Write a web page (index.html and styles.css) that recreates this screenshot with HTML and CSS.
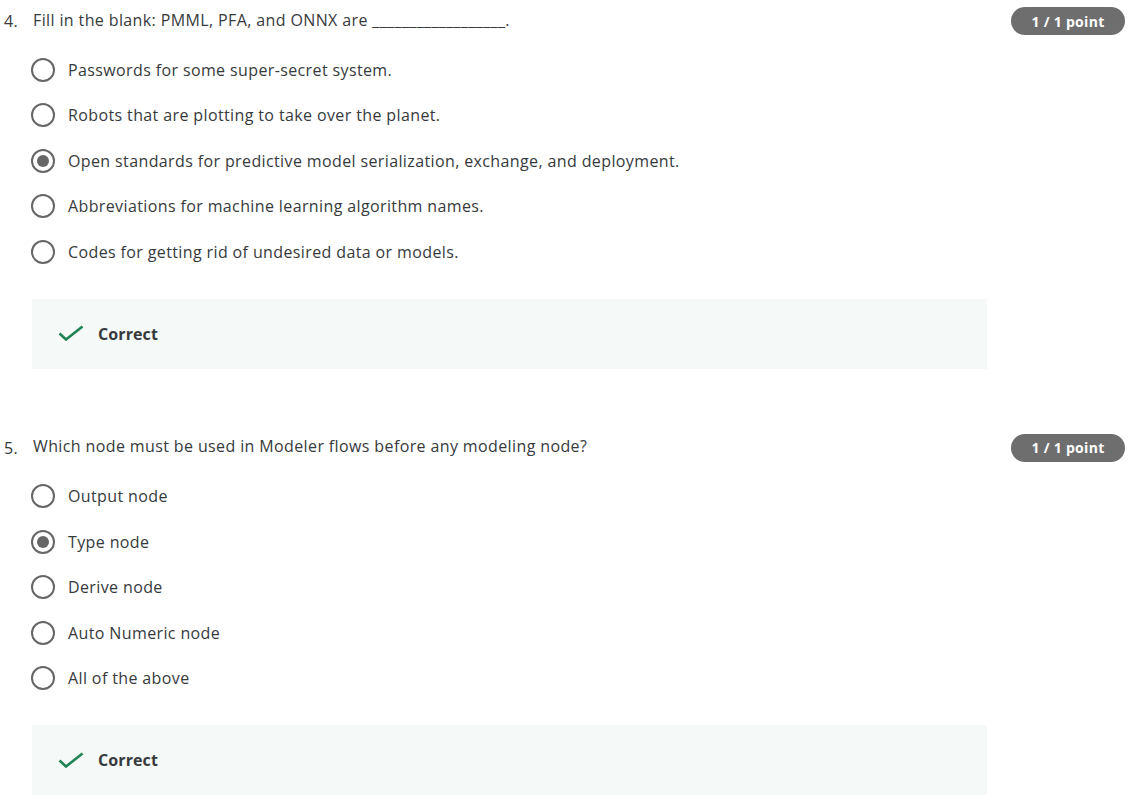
FILE: index.html
```html
<!DOCTYPE html>
<html>
<head>
<meta charset="utf-8">
<link rel="stylesheet" href="styles.css">
</head>
<body>
<div class="page">
  <section class="question">
    <div class="q-head">
      <span class="q-num">4.</span>
      <span class="q-text">Fill in the blank: PMML, PFA, and ONNX are __________________.</span>
      <span class="badge">1 / 1 point</span>
    </div>
    <ul class="options">
      <li class="option"><span class="radio"></span><span>Passwords for some super-secret system.</span></li>
      <li class="option"><span class="radio"></span><span>Robots that are plotting to take over the planet.</span></li>
      <li class="option"><span class="radio checked"></span><span>Open standards for predictive model serialization, exchange, and deployment.</span></li>
      <li class="option"><span class="radio"></span><span>Abbreviations for machine learning algorithm names.</span></li>
      <li class="option"><span class="radio"></span><span>Codes for getting rid of undesired data or models.</span></li>
    </ul>
    <div class="feedback">
      <svg class="check" width="26" height="16" viewBox="0 0 26 16"><path d="M1.5 8.5 L8 14.5 L24.5 1.5" fill="none" stroke="#1f8354" stroke-width="2.6"/></svg>
      <span class="fb-text">Correct</span>
    </div>
  </section>
  <section class="question">
    <div class="q-head">
      <span class="q-num">5.</span>
      <span class="q-text">Which node must be used in Modeler flows before any modeling node?</span>
      <span class="badge">1 / 1 point</span>
    </div>
    <ul class="options">
      <li class="option"><span class="radio"></span><span>Output node</span></li>
      <li class="option"><span class="radio checked"></span><span>Type node</span></li>
      <li class="option"><span class="radio"></span><span>Derive node</span></li>
      <li class="option"><span class="radio"></span><span>Auto Numeric node</span></li>
      <li class="option"><span class="radio"></span><span>All of the above</span></li>
    </ul>
    <div class="feedback">
      <svg class="check" width="26" height="16" viewBox="0 0 26 16"><path d="M1.5 8.5 L8 14.5 L24.5 1.5" fill="none" stroke="#1f8354" stroke-width="2.6"/></svg>
      <span class="fb-text">Correct</span>
    </div>
  </section>
</div>
</body>
</html>
```
FILE: styles.css
```css
html, body {
  margin: 0;
  padding: 0;
  background: #ffffff;
}
body {
  font-family: "Open Sans", "Noto Sans", sans-serif;
  font-size: 16px;
  letter-spacing: 0.38px;
  color: #373a3c;
}
.page {
  padding: 7px 8px 0 4px;
}
.question + .question {
  margin-top: 65px;
}
.q-head {
  display: flex;
  align-items: center;
  height: 28px;
}
.q-num {
  width: 29px;
  flex: none;
}
.q-text {
  flex: 1;
  margin-top: -3px;
}
.badge {
  flex: none;
  width: 114px;
  height: 28px;
  border-radius: 14px;
  background: #6e6e6e;
  color: #ffffff;
  font-weight: 700;
  font-size: 14px;
  letter-spacing: 0.3px;
  display: flex;
  align-items: center;
  justify-content: center;
}
.options {
  list-style: none;
  margin: 12px 0 0 0;
  padding: 0 0 0 27px;
}
.option {
  height: 45.5px;
  display: flex;
  align-items: center;
  gap: 13px;
}
.radio {
  flex: none;
  width: 24px;
  height: 24px;
  box-sizing: border-box;
  border: 2px solid #666666;
  border-radius: 50%;
  display: flex;
  align-items: center;
  justify-content: center;
}
.radio.checked::after {
  content: "";
  width: 12px;
  height: 12px;
  border-radius: 50%;
  background: #666666;
}
.feedback {
  margin: 24px 0 0 28px;
  width: 955px;
  height: 70px;
  background: #f5f9f8;
  display: flex;
  align-items: center;
  padding-left: 26px;
  box-sizing: border-box;
}
.check {
  display: block;
  margin-top: -1px;
}
.fb-text {
  margin-left: 14px;
  font-weight: 700;
  letter-spacing: 0.1px;
  color: #373a3c;
}
```
